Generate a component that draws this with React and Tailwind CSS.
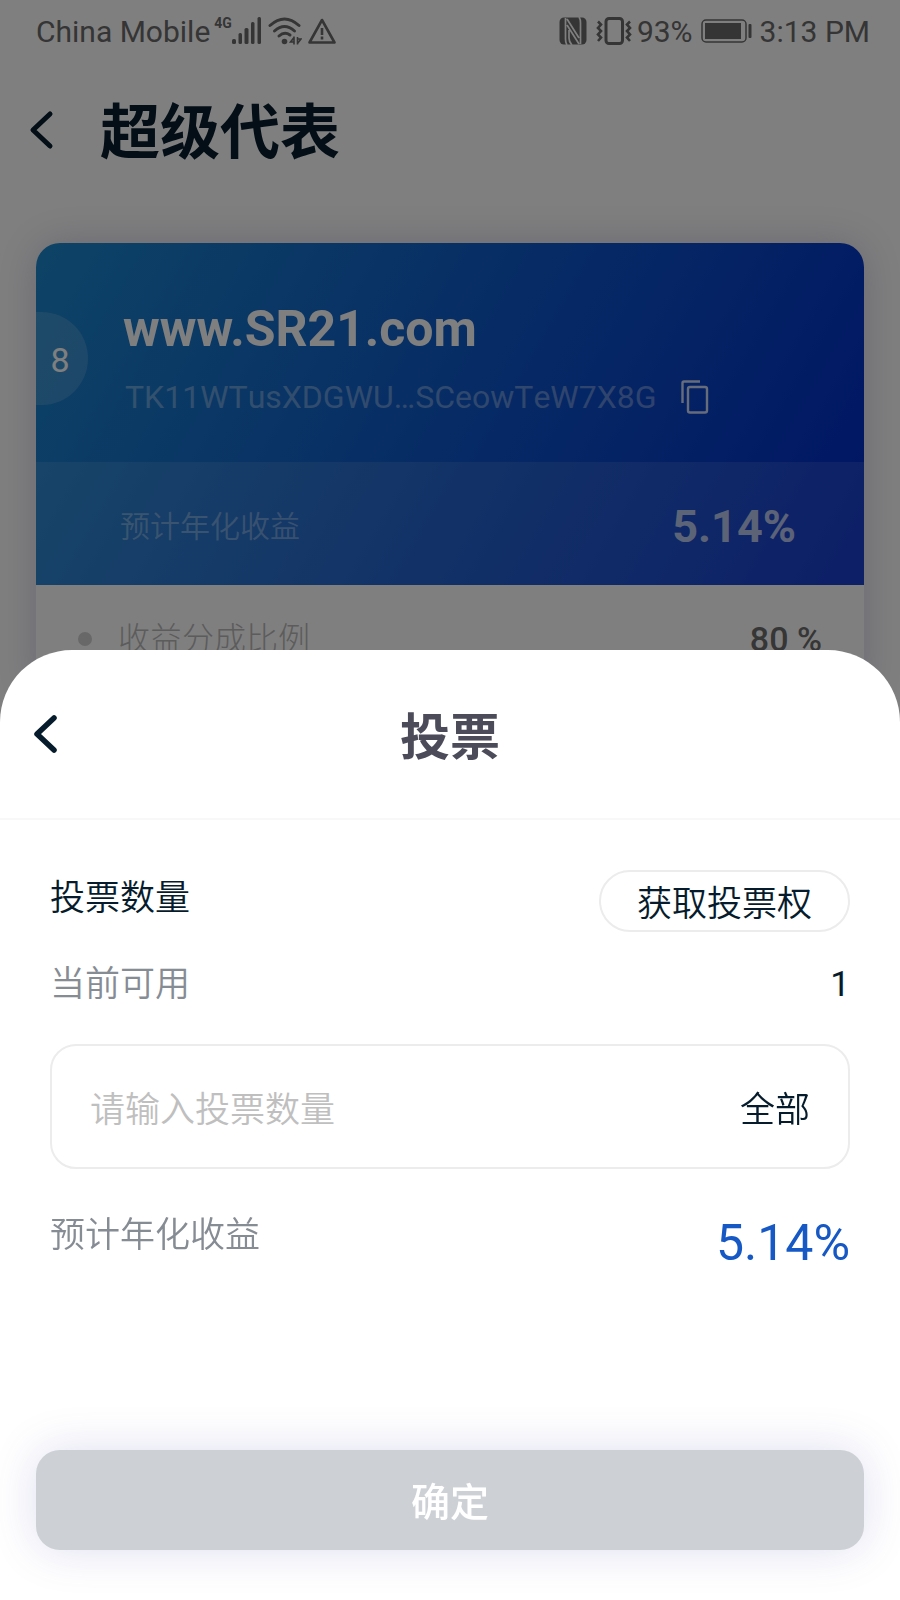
import { useState } from 'react';

const BackIcon = ({ strokeWidth }) => (
  <svg width="26" height="42" viewBox="0 0 26 42" fill="none" aria-hidden="true">
    <path
      d="M22 5 L5 21 L22 37"
      stroke="currentColor"
      strokeWidth={strokeWidth}
      strokeLinecap="round"
      strokeLinejoin="round"
    />
  </svg>
);

const SignalIcon = () => (
  <svg width="30" height="28" viewBox="0 0 30 28" fill="currentColor" aria-hidden="true">
    <rect x="0" y="22" width="4" height="5" rx="1.500" />
    <rect x="6.500" y="16" width="3.500" height="11" rx="1.500" />
    <rect x="12.500" y="11" width="4" height="16" rx="1.500" />
    <rect x="19" y="5" width="3.500" height="22" rx="1.500" />
    <rect x="25.500" y="0" width="3.500" height="27" rx="1.500" />
  </svg>
);

const WifiIcon = () => (
  <svg width="34" height="28" viewBox="0 0 34 28" fill="none" stroke="currentColor" aria-hidden="true">
    <path d="M2 8.500 Q16.500 -4.500 31 8.500" strokeWidth="3" strokeLinecap="round" />
    <path d="M6.500 14 Q16.500 5 26.500 14" strokeWidth="3" strokeLinecap="round" />
    <path d="M11 19 Q16.500 14 22 18" strokeWidth="3" strokeLinecap="round" />
    <circle cx="16.500" cy="24.500" r="2.800" fill="currentColor" stroke="none" />
    <path d="M26 19.500 V27.500 M26 20.500 L22.500 25 H26" strokeWidth="1.600" />
    <path d="M29.500 27.500 V20 M29.500 26.500 L33 22 H29.500" strokeWidth="1.600" />
  </svg>
);

const WarningIcon = () => (
  <svg width="28" height="28" viewBox="0 0 28 28" fill="none" stroke="currentColor" aria-hidden="true">
    <path d="M14 3 L26.500 25.500 H1.500 Z" strokeWidth="2.600" strokeLinejoin="round" />
    <path d="M14 11 V18 M14 19.500 V22.500" strokeWidth="2.600" />
  </svg>
);

const NfcIcon = () => (
  <svg width="28" height="28" viewBox="0 0 28 28" aria-hidden="true">
    <rect x="0.500" y="0.500" width="27" height="27" rx="4.500" fill="currentColor" />
    <path
      d="M8 28 Q6.500 26 6.500 22 V1 M20 0 Q21.500 2 21.500 6 V27 M8 2 L20 21 M10 13 V21 Q10 25 13 28 M8 8 L20 27"
      fill="none"
      stroke="white"
      strokeWidth="1.700"
    />
  </svg>
);

const VibrateIcon = () => (
  <svg width="36" height="28" viewBox="0 0 36 28" fill="none" stroke="currentColor" aria-hidden="true">
    <rect x="10" y="1.500" width="16.500" height="25" rx="3" strokeWidth="3" />
    <path d="M2 4.500 L5 7.500 L2 11 L5 14 L2 17.500 L5 20.500 L2 24" strokeWidth="2.600" />
    <path d="M34 4.500 L31 7.500 L34 11 L31 14 L34 17.500 L31 20.500 L34 24" strokeWidth="2.600" />
  </svg>
);

const BatteryIcon = () => (
  <svg width="51" height="24" viewBox="0 0 51 24" aria-hidden="true">
    <rect x="1" y="1" width="44" height="22" rx="4" fill="none" stroke="currentColor" strokeWidth="1.500" />
    <rect x="4" y="4" width="36" height="16" fill="currentColor" />
    <rect x="47.500" y="5" width="3" height="14" rx="1" fill="currentColor" />
  </svg>
);

const CopyIcon = () => (
  <svg width="28" height="34" viewBox="0 0 28 34" fill="none" stroke="currentColor" strokeWidth="2.400" aria-hidden="true">
    <path d="M1.500 23 V3 Q1.500 1.500 3 1.500 H19" />
    <rect x="7" y="7" width="19" height="25.500" rx="2" />
  </svg>
);

const StatusBar = () => (
  <div className="flex h-[62px] items-center justify-between pl-9 pr-[30px] text-[30px] text-[#6a6a6a]">
    <div className="flex items-center">
      <span>China Mobile</span>
      <span className="ml-1 pb-4 text-[14px] font-bold leading-[18px]">4G</span>
      <SignalIcon />
      <span className="ml-[6px] flex gap-[6px]">
        <WifiIcon />
        <WarningIcon />
      </span>
    </div>
    <div className="flex items-center">
      <NfcIcon />
      <span className="ml-[9px] mr-[5px]">
        <VibrateIcon />
      </span>
      <span>93%</span>
      <span className="ml-2 mr-2">
        <BatteryIcon />
      </span>
      <span>3:13 PM</span>
    </div>
  </div>
);

const RepresentativeCard = () => (
  <section className="mx-9 mt-[46px] rounded-t-3xl bg-white shadow-[0_0_40px_rgba(80,80,150,0.25)]">
    <div className="overflow-hidden rounded-t-3xl bg-linear-[120deg] from-[#1c88cc] to-[#0028c8]">
      <div className="flex h-[219px]">
        <span className="mt-[69px] flex h-[93px] w-[52px] items-center justify-center rounded-r-full bg-white/15 pt-1 pr-1 text-[34px] text-white">
          8
        </span>
        <div className="ml-[35px] pt-[56px]">
          <h2 className="text-[50px] font-bold leading-[60px] text-white">www.SR21.com</h2>
          <div className="mt-[14px] flex items-center gap-6 pl-[2px] text-white">
            <span className="text-[32px] leading-[48px] text-white/35 [font-kerning:none]">
              TK11WTusXDGWU…SCeowTeW7X8G
            </span>
            <button type="button" aria-label="复制" className="text-white/80">
              <CopyIcon />
            </button>
          </div>
        </div>
      </div>
      <div className="flex h-[123px] items-center justify-between bg-white/10 pl-[84px] pr-[68px] pt-[6px]">
        <span className="text-[30px] font-[350] text-white/35">预计年化收益</span>
        <span className="text-[45px] font-bold text-white/70">5.14%</span>
      </div>
    </div>
    <div className="flex h-[108px] items-center px-[42px]">
      <span className="size-[14px] rounded-full bg-[#d0d0d0]" />
      <span className="ml-[26px] text-[32px] font-light text-[#b8b8b8]">收益分成比例</span>
      <span className="ml-auto text-[34px] font-medium text-[#6c6c6c]">80 %</span>
    </div>
  </section>
);

const VoteSheet = () => {
  const available = 1;
  const [amount, setAmount] = useState('');

  return (
    <div
      role="dialog"
      aria-labelledby="vote-title"
      className="fixed inset-x-0 bottom-0 rounded-t-[72px] bg-white text-[35px] font-[350] text-[#061c2c]"
    >
      <header className="grid h-[170px] grid-cols-[1fr_auto_1fr] items-center border-b-2 border-[#f8f8f8] px-8">
        <button type="button" aria-label="返回" className="justify-self-start">
          <BackIcon strokeWidth="5.500" />
        </button>
        <h2 id="vote-title" className="pt-2 text-[50px] font-bold text-[#4c4b5a]">
          投票
        </h2>
      </header>

      <div className="px-[50px] pt-[50px]">
        <div className="flex items-start justify-between">
          <label htmlFor="amount" className="pt-[3px] leading-[52px]">
            投票数量
          </label>
          <button
            type="button"
            className="flex h-[62px] items-center rounded-full border-2 border-[#ececec] px-9 pt-2"
          >
            获取投票权
          </button>
        </div>

        <div className="mt-6 flex justify-between pt-[3px] leading-[52px]">
          <span className="text-[#868c94]">当前可用</span>
          <span className="font-normal">{available}</span>
        </div>

        <div className="mt-[33px] flex h-[125px] items-center rounded-[26px] border-2 border-[#ececec] px-[38px] pt-[10px]">
          <input
            id="amount"
            type="text"
            inputMode="numeric"
            placeholder="请输入投票数量"
            value={amount}
            onChange={(e) => setAmount(e.target.value)}
            className="min-w-0 flex-1 outline-none placeholder:text-[#bfbfbf]"
          />
          <button type="button" onClick={() => setAmount(String(available))}>
            全部
          </button>
        </div>

        <div className="mt-11 flex items-start justify-between">
          <span className="pt-[3px] leading-10 text-[#868c94]">预计年化收益</span>
          <span className="text-[50px] font-normal leading-[60px] text-[#1659c5]">5.14%</span>
        </div>
      </div>

      <div className="px-9 pb-[50px] pt-[177px]">
        <button
          type="button"
          className="h-[100px] w-full rounded-3xl bg-[#cdd1d6] pt-[6px] text-[39px] font-medium text-white shadow-[0_0_45px_rgba(90,90,180,0.2)]"
        >
          确定
        </button>
      </div>
    </div>
  );
};

export default function App() {
  return (
    <div lang="zh-CN" className="min-h-screen bg-white font-[Roboto,'Noto_Sans_CJK_SC',sans-serif]">
      <StatusBar />
      <header className="flex h-[135px] items-center pl-7 text-[#061c2c]">
        <button type="button" aria-label="返回">
          <BackIcon strokeWidth="5" />
        </button>
        <h1 className="ml-[46px] pt-2 text-[60px] font-bold">超级代表</h1>
      </header>
      <RepresentativeCard />

      {/* Backdrop */}
      <div className="fixed inset-0 bg-black/50" />
      <VoteSheet />
    </div>
  );
}
